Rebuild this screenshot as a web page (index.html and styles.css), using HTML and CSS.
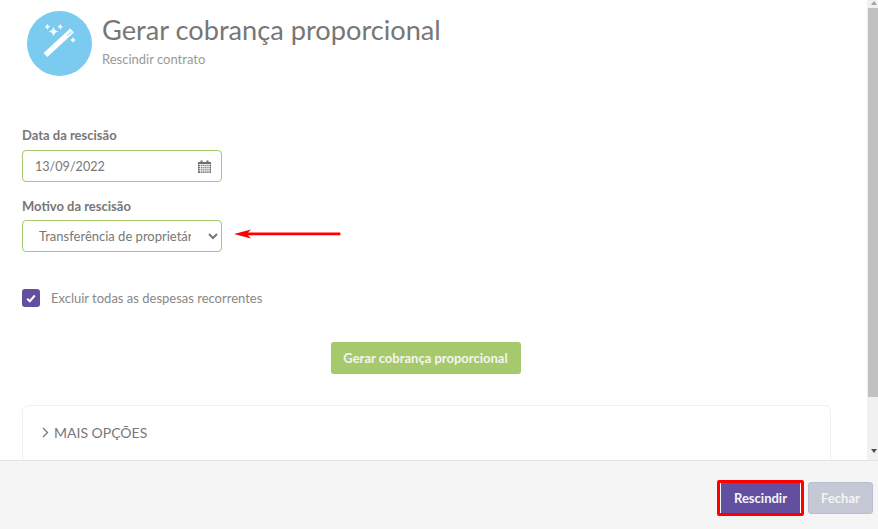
FILE: index.html
```html
<!DOCTYPE html>
<html lang="pt-BR">
<head>
  <meta charset="UTF-8" />
  <title>Gerar cobrança proporcional</title>
  <link rel="stylesheet" href="styles.css">
</head>
<body>
  <div class="modal">
    <div class="modal-body">
      <div class="content">
        <header class="head">
          <div class="head-icon">
            <svg width="65" height="65" viewBox="0 0 65 65">
              <path class="wand-body" d="M18.500 44 L45 19.500" />
              <path class="wand-slit" d="M40.500 24.500 L44.500 20.800" />
              <path class="star" d="M26.500 15.500 Q27.200 19.800 31.500 20.500 Q27.200 21.200 26.500 25.500 Q25.800 21.200 21.500 20.500 Q25.800 19.800 26.500 15.500 Z" />
              <path class="star" d="M20.500 12.700 Q20.900 15.300 23.500 15.700 Q20.900 16.100 20.500 18.700 Q20.100 16.100 17.500 15.700 Q20.100 15.300 20.500 12.700 Z" />
              <path class="star" d="M33.300 12.700 Q33.700 15.300 36.300 15.700 Q33.700 16.100 33.300 18.700 Q32.900 16.100 30.300 15.700 Q32.900 15.300 33.300 12.700 Z" />
              <path class="star" d="M46 26 Q46.400 28.600 49 29 Q46.400 29.400 46 32 Q45.600 29.400 43 29 Q45.600 28.600 46 26 Z" />
            </svg>
          </div>
          <div>
            <h1>Gerar cobrança proporcional</h1>
            <p>Rescindir contrato</p>
          </div>
        </header>

        <form class="form">
          <label class="field-label">Data da rescisão</label>
          <div class="date-input">
            <input type="text" value="13/09/2022">
            <svg width="13" height="13" viewBox="0 0 13 13">
              <path fill="#6f6f6f" d="M0 2h2.500V0.500h2V2h4V0.500h2V2H13v11H0z" />
              <path stroke="#fff" stroke-width="0.800" fill="none" d="M0.500 4.500h12M0.500 6.600h12M0.500 8.700h12M0.500 10.800h12M2.600 4.500v8.500M4.700 4.500v8.500M6.800 4.500v8.500M8.900 4.500v8.500M11 4.500v8.500" />
            </svg>
          </div>

          <label class="field-label motive-label">Motivo da rescisão</label>
          <div class="select-row">
            <select class="select-input">
              <option>Transferência de proprietário</option>
            </select>
            <svg class="arrow" width="107" height="10" viewBox="0 0 107 10">
              <path d="M0 5 L17 0.500 L14 3.600 L106 3.600 Q107 5 106 6.200 L14 6.200 L17 9.500 Z" fill="#f00" />
            </svg>
          </div>

          <div class="check-row">
            <span class="checkbox">
              <svg width="10" height="9" viewBox="0 0 10 9">
                <path d="M1.200 4.800 L3.800 7.200 L8.800 1.500" fill="none" stroke="#fff" stroke-width="2" />
              </svg>
            </span>
            <span>Excluir todas as despesas recorrentes</span>
          </div>

          <div class="center">
            <button type="button" class="btn btn-green">Gerar cobrança proporcional</button>
          </div>

          <div class="more">
            <svg width="7" height="11" viewBox="0 0 7 11">
              <path d="M1 1 L5.500 5.500 L1 10" fill="none" stroke="#777" stroke-width="1.300" />
            </svg>
            <span>MAIS OPÇÕES</span>
          </div>
        </form>
      </div>

      <div class="scrollbar">
        <span class="arrow-up"></span>
        <div class="thumb"></div>
        <span class="arrow-down"></span>
      </div>
    </div>

    <footer class="modal-footer">
      <div class="mark">
        <button type="button" class="btn btn-purple">Rescindir</button>
      </div>
      <button type="button" class="btn btn-gray">Fechar</button>
    </footer>
  </div>
</body>
</html>
```

FILE: styles.css
```css
* {
  box-sizing: border-box;
  margin: 0;
  padding: 0;
}
html, body {
  height: 100%;
  overflow: hidden;
}
body {
  font-family: Lato, "Open Sans", sans-serif;
  background: #fff;
  color: #777;
  font-size: 13px;
}
.modal {
  display: flex;
  flex-direction: column;
  height: 529px;
}
.modal-body {
  display: flex;
  height: 460px;
  overflow: hidden;
}
.content {
  flex: 1;
  padding: 11px 36px 0 22px;
}
.head {
  display: flex;
  margin-left: 5px;
  height: 66px;
}
.head-icon {
  width: 65px;
  height: 65px;
  border-radius: 50%;
  background: #7bcbf0;
  margin-right: 10px;
}
.wand-body {
  stroke: #fff;
  stroke-width: 5.500;
  fill: none;
}
.wand-slit {
  stroke: #7bcbf0;
  stroke-width: 1;
  fill: none;
}
.star {
  fill: #fff;
}
.head h1 {
  font-size: 27.200px;
  font-weight: 400;
  line-height: 32px;
  color: #777;
  margin-top: 3px;
}
.head p {
  font-size: 13px;
  color: #999;
  line-height: 16px;
  margin-top: 5px;
}
.form {
  margin-top: 50px;
}
.field-label {
  display: block;
  font-size: 13px;
  font-weight: 700;
  line-height: 17px;
  color: #777;
  margin-bottom: 6px;
}
.motive-label {
  margin-top: 16px;
  margin-bottom: 5px;
}
.date-input {
  display: flex;
  align-items: center;
  width: 200px;
  height: 32px;
  padding: 0 10px 0 12px;
  border: 1px solid #a5c96b;
  border-radius: 4px;
  background: #fff;
}
.date-input input {
  flex: 1;
  min-width: 0;
  border: none;
  outline: none;
  font-family: inherit;
  font-size: 12.600px;
  color: #777;
}
.select-row {
  display: flex;
  align-items: center;
}
.select-input {
  width: 200px;
  height: 32px;
  padding: 0 14px 0 12px;
  border: 1px solid #a5c96b;
  border-radius: 4px;
  background: #fff;
  font-family: inherit;
  font-size: 13px;
  color: #777;
}
.arrow {
  margin: -4px 0 0 12px;
}
.check-row {
  display: flex;
  align-items: center;
  margin-top: 37px;
  font-size: 13px;
  color: #888;
}
.checkbox {
  display: flex;
  align-items: center;
  justify-content: center;
  width: 18px;
  height: 18px;
  border-radius: 3px;
  background: #634f9f;
  margin-right: 11px;
}
.center {
  display: flex;
  justify-content: center;
  margin-top: 35px;
  padding-right: 2px;
}
.btn {
  height: 32px;
  border: none;
  border-radius: 3px;
  font-family: inherit;
  font-size: 13px;
  font-weight: 700;
  color: #f4f4f4;
}
.btn-green {
  width: 190px;
  background: #a5c96b;
}
.more {
  display: flex;
  align-items: center;
  gap: 5px;
  height: 70px;
  margin-top: 31px;
  padding: 0 19px 16px;
  border: 1px solid #f0f0f5;
  border-radius: 6px;
  font-size: 14px;
  color: #777;
}
.scrollbar {
  display: flex;
  flex-direction: column;
  width: 11px;
  background: #f1f1f1;
}
.arrow-up {
  width: 0;
  height: 0;
  margin: 1px 0 3px 4px;
  border: 3.500px solid transparent;
  border-top: none;
  border-bottom: 4px solid #a3a3a3;
}
.thumb {
  height: 389px;
  margin-left: 1px;
  background: #c1c1c1;
}
.arrow-down {
  width: 0;
  height: 0;
  margin: auto 0 7px 4px;
  border: 3.500px solid transparent;
  border-bottom: none;
  border-top: 4px solid #505050;
}
.modal-footer {
  display: flex;
  align-items: center;
  justify-content: flex-end;
  gap: 4px;
  flex: 1;
  padding: 5px 5px 0 0;
  background: #f5f5f5;
  border-top: 1px solid #e3e3e3;
}
.mark {
  border: 3px solid #f00;
  border-radius: 2px;
  padding: 0 1px;
  background: #fff;
}
.btn-purple {
  display: block;
  width: 79px;
  height: 30px;
  background: #634f9f;
  border-radius: 0;
}
.btn-gray {
  width: 65px;
  background: #c5c9d6;
  border: 1px solid #babfcf;
}
```
